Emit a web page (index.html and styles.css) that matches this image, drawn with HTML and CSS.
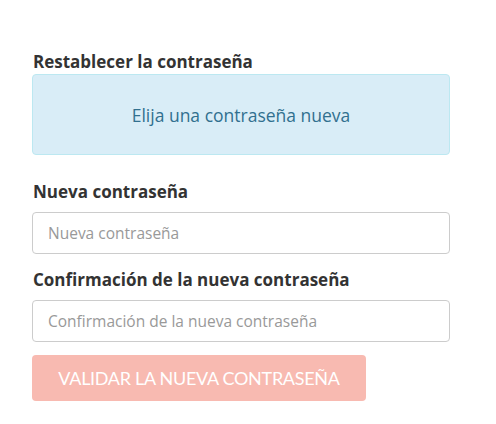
FILE: index.html
```html
<!DOCTYPE html>
<html lang="es">
<head>
<meta charset="utf-8">
<title>Restablecer la contraseña</title>
<link rel="stylesheet" href="styles.css">
</head>
<body>
<div class="page">
  <h1 class="title">Restablecer la contraseña</h1>
  <div class="alert">Elija una contraseña nueva</div>
  <form class="form">
    <label class="label" for="p1">Nueva contraseña</label>
    <input class="input" id="p1" type="password" placeholder="Nueva contraseña">
    <label class="label" for="p2">Confirmación de la nueva contraseña</label>
    <input class="input" id="p2" type="password" placeholder="Confirmación de la nueva contraseña">
    <button class="button" type="button">Validar la nueva contraseña</button>
  </form>
</div>
</body>
</html>
```

FILE: styles.css
```css
html, body {
  margin: 0;
  padding: 0;
  background: #ffffff;
}
body {
  font-family: "Open Sans", "Lato", sans-serif;
  color: #333333;
}
.page {
  width: 418px;
  padding: 52px 0 0 32px;
}
.title {
  margin: 0 0 2px 1px;
  font-size: 17px;
  line-height: 20px;
  font-weight: 700;
  color: #333333;
}
.alert {
  box-sizing: border-box;
  height: 81px;
  display: flex;
  align-items: center;
  justify-content: center;
  background: #d9edf7;
  border: 1px solid #bce8f1;
  border-radius: 4px;
  color: #31708f;
  font-size: 17.5px;
  margin-bottom: 25px;
}
.form {
  display: flex;
  flex-direction: column;
}
.label {
  font-size: 17px;
  font-weight: 700;
  line-height: 24px;
  margin: 0 0 8px 1px;
  color: #333333;
}
.label + .input + .label {
  margin-bottom: 8px;
}
.input {
  box-sizing: border-box;
  height: 42px;
  width: 418px;
  border: 1px solid #cccccc;
  border-radius: 4px;
  padding: 0 15px;
  font-family: inherit;
  font-size: 15.5px;
  color: #555;
  margin: 0 0 14px 0;
}
.input::placeholder {
  color: #999999;
}
.button {
  align-self: flex-start;
  box-sizing: border-box;
  height: 46px;
  width: 334px;
  margin-top: -1px;
  border: none;
  border-radius: 4px;
  background: #f8bab1;
  color: #ffffff;
  font-family: "Lato", sans-serif;
  font-size: 18px;
  text-transform: uppercase;
  letter-spacing: -0.3px;
}
```
